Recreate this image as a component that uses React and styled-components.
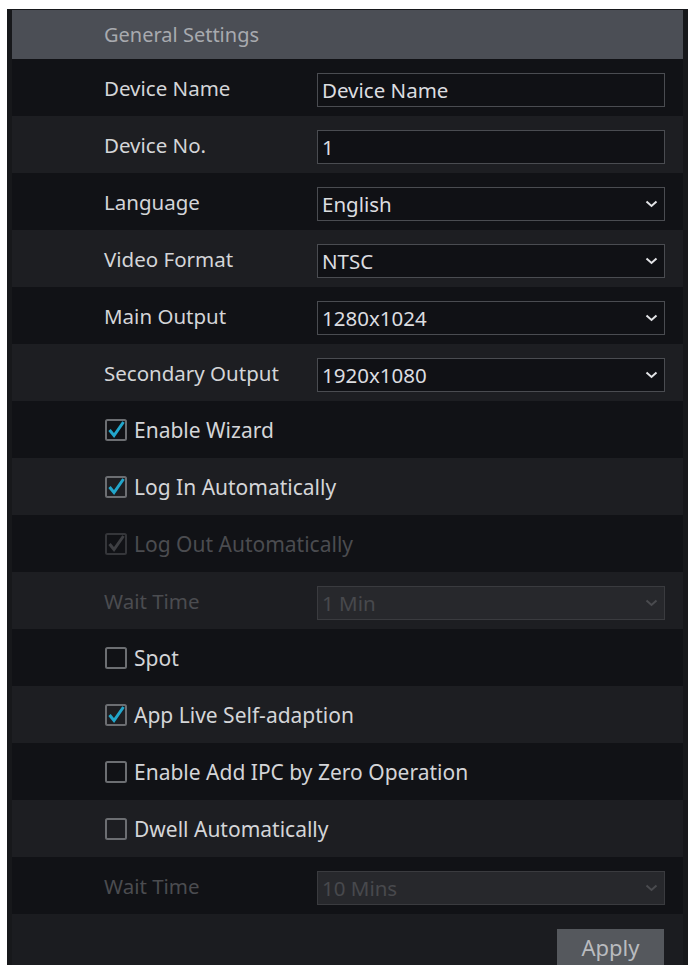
import styled, { createGlobalStyle } from "styled-components";

const GlobalStyle = createGlobalStyle`
  body {
    margin: 0;
    background: #ffffff;
    font-family: "Noto Sans", "Open Sans", sans-serif;
  }
`;

const Page = styled.div`
  padding: 9px 4px 0 7px;
  height: 965px;
  box-sizing: border-box;
  overflow: hidden;
`;

const Panel = styled.div`
  background: #1b1c20;
  border: 5px solid #17181b;
  border-top-width: 1px;
  border-bottom: none;
  height: 100%;
  box-sizing: border-box;
`;

const Header = styled.div`
  height: 49px;
  display: flex;
  align-items: center;
  padding-left: 92px;
  background: #4b4e55;
  color: #a8aaaf;
  font-size: 20px;
`;

const Row = styled.div`
  height: 57px;
  display: grid;
  grid-template-columns: 213px 348px;
  align-items: center;
  padding-left: 92px;
  background: ${({ $alt }) => ($alt ? "#1d1e22" : "#111216")};
`;

const Label = styled.span`
  font-size: ${({ $check }) => ($check ? "21px" : "20.5px")};
  color: ${({ $disabled }) => ($disabled ? "#4b4c50" : "#d4d5d8")};
  margin-top: ${({ $check }) => ($check ? "0" : "1px")};
`;

const Field = styled.div`
  height: 34px;
  box-sizing: border-box;
  display: flex;
  align-items: center;
  justify-content: space-between;
  padding: 0 6px 0 4px;
  border: 1px solid ${({ $disabled }) => ($disabled ? "#3a3b3f" : "#4a4c51")};
  background: ${({ $disabled }) => ($disabled ? "#27282c" : "#101115")};
  color: ${({ $disabled }) => ($disabled ? "#48494d" : "#dcdde0")};
  font-size: 20.5px;
  margin-top: 4px;
`;

const CheckRow = styled.label`
  display: flex;
  align-items: center;
  gap: 6px;
  grid-column: 1 / span 2;
`;

const Footer = styled.div`
  display: flex;
  justify-content: flex-end;
  padding: 15px 19px 0 0;
`;

const ApplyButton = styled.button`
  width: 107px;
  height: 40px;
  border: none;
  background: #55585d;
  color: #b9bbbf;
  font-family: inherit;
  font-size: 22px;
  padding: 0 0 4px;
`;

const Chevron = ({ dim }) => (
  <svg width="13" height="8" viewBox="0 0 13 8">
    <path
      d="M1.5 1.5 L6.5 6 L11.5 1.5"
      fill="none"
      stroke={dim ? "#4a4b4f" : "#e2e3e6"}
      strokeWidth="2"
    />
  </svg>
);

const Box = ({ checked, dim }) => (
  <svg width="24" height="24" viewBox="0 0 24 24">
    <rect
      x="2"
      y="2"
      width="20"
      height="20"
      rx="1.5"
      fill="none"
      stroke={dim ? "#35363a" : "#6c6e72"}
      strokeWidth="2"
    />
    {checked && (
      <path
        d="M5.5 12 L10 17.5 L19.5 4"
        fill="none"
        stroke={dim ? "#3e3f43" : "#22a6cb"}
        strokeWidth="3"
      />
    )}
  </svg>
);

const fields = [
  { label: "Device Name", value: "Device Name" },
  { label: "Device No.", value: "1" },
  { label: "Language", value: "English", select: true },
  { label: "Video Format", value: "NTSC", select: true },
  { label: "Main Output", value: "1280x1024", select: true },
  { label: "Secondary Output", value: "1920x1080", select: true },
  { check: "Enable Wizard", checked: true },
  { check: "Log In Automatically", checked: true },
  { check: "Log Out Automatically", checked: true, disabled: true },
  { label: "Wait Time", value: "1 Min", select: true, disabled: true },
  { check: "Spot" },
  { check: "App Live Self-adaption", checked: true },
  { check: "Enable Add IPC by Zero Operation" },
  { check: "Dwell Automatically" },
  { label: "Wait Time", value: "10 Mins", select: true, disabled: true },
];

export default function App() {
  return (
    <>
      <GlobalStyle />
      <Page>
        <Panel>
          <Header>General Settings</Header>
          {fields.map((f, i) => (
            <Row key={i} $alt={i % 2 === 1}>
              {f.check ? (
                <CheckRow>
                  <Box checked={f.checked} dim={f.disabled} />
                  <Label $check $disabled={f.disabled}>{f.check}</Label>
                </CheckRow>
              ) : (
                <>
                  <Label $disabled={f.disabled}>{f.label}</Label>
                  <Field $disabled={f.disabled}>
                    <span>{f.value}</span>
                    {f.select && <Chevron dim={f.disabled} />}
                  </Field>
                </>
              )}
            </Row>
          ))}
          <Footer>
            <ApplyButton>Apply</ApplyButton>
          </Footer>
        </Panel>
      </Page>
    </>
  );
}
